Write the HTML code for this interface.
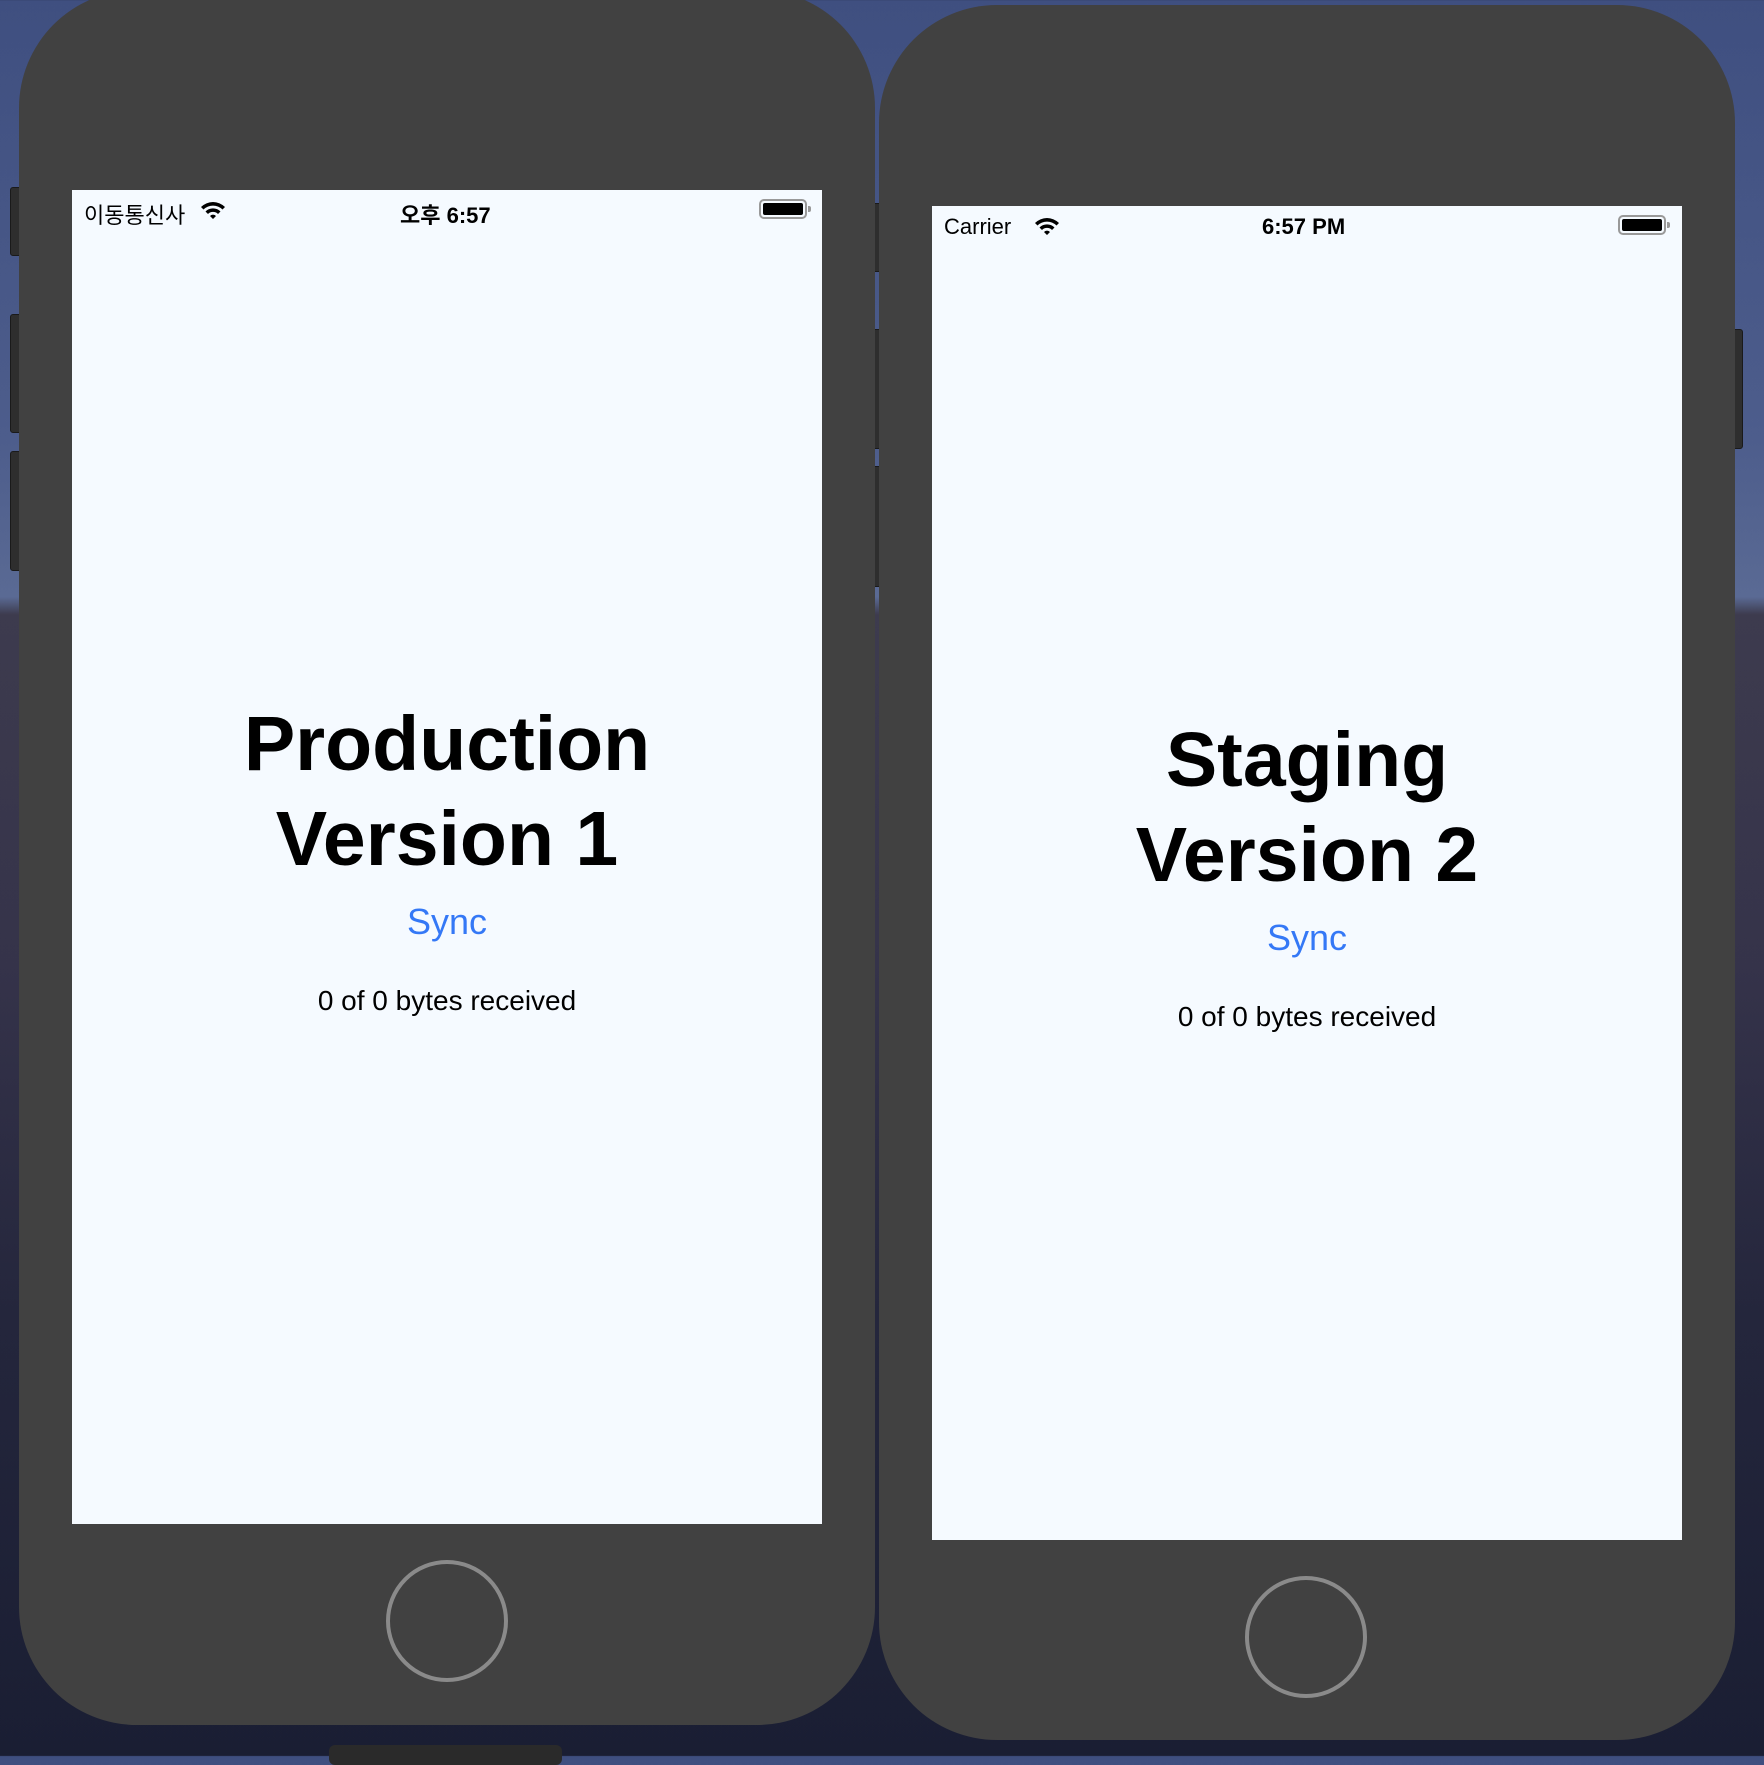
<!DOCTYPE html>
<html><head><meta charset="utf-8"><style>
*{margin:0;padding:0;box-sizing:border-box}
body{width:1764px;height:1756px;overflow:hidden;position:relative;font-family:"Liberation Sans","Noto Sans CJK KR",sans-serif;
background:linear-gradient(180deg,#3f4f80 0%,#4d5d8c 25%,#5a6a94 34%,#3d3b4e 35%,#35334a 55%,#24263c 75%,#1a1e33 100%);}
.ph{position:absolute;background:#414141;border-radius:118px;}
.btn{position:absolute;background:#2e2e2e;border:1px solid #1a1a1a;border-radius:3px;}
.scr{position:absolute;background:#f5faff;overflow:hidden}
.sb{position:absolute;top:8px;left:0;right:0;height:26px;font-size:22px;color:#000}
.t{position:absolute;left:0;right:0;text-align:center;color:#000}
.big{font-weight:bold;font-size:77px;line-height:1}
.sync{color:#3478f6;font-size:36px;line-height:1}
.by{font-size:28px;line-height:1}
.home{position:absolute;width:122px;height:122px;border:4px solid #8a8a8a;border-radius:50%}
.bat{position:absolute;width:48px;height:20px;border:2px solid #999;border-radius:5px;padding:2px}
.bat i{display:block;width:100%;height:100%;background:#000;border-radius:2px}
.bat:after{content:"";position:absolute;right:-6px;top:5px;width:3px;height:6px;background:#999;border-radius:0 2px 2px 0}
</style></head><body>
<div style="position:absolute;left:329px;top:1745px;width:233px;height:20px;background:#2a2a2a;border-radius:6px"></div>

<div class="btn" style="left:10px;top:187px;width:12px;height:69px"></div>
<div class="btn" style="left:10px;top:314px;width:12px;height:119px"></div>
<div class="btn" style="left:10px;top:451px;width:12px;height:120px"></div>
<div class="btn" style="left:871px;top:203px;width:12px;height:69px"></div>
<div class="btn" style="left:871px;top:329px;width:12px;height:120px"></div>
<div class="btn" style="left:871px;top:466px;width:12px;height:121px"></div>
<div class="btn" style="left:1731px;top:329px;width:12px;height:120px"></div>

<div class="ph" style="left:19px;top:-10px;width:856px;height:1735px"></div>
<div class="ph" style="left:879px;top:5px;width:856px;height:1735px"></div>

<div class="scr" style="left:72px;top:190px;width:750px;height:1334px">
 <div class="sb">
  <span style="position:absolute;left:12px;top:0">이동통신사</span>
  <svg style="position:absolute;left:126px;top:2px" width="30" height="20" viewBox="0 0 30 20"><path d="M3 7a17 17 0 0 1 24 0l-2.5 2.5a13.5 13.5 0 0 0-19 0z M7.5 11.5a10.5 10.5 0 0 1 15 0L20 14a7 7 0 0 0-10 0z M12 16a4 4 0 0 1 6 0l-3 3z" fill="#000"/></svg>
  <span style="position:absolute;left:328px;top:0;font-weight:bold">오후 6:57</span>
  <div class="bat" style="left:687px;top:1px"><i></i></div>
 </div>
 <div class="t big" style="top:516px">Production</div>
 <div class="t big" style="top:611px">Version 1</div>
 <div class="t sync" style="top:714px">Sync</div>
 <div class="t by" style="top:797px">0 of 0 bytes received</div>
</div>
<div class="home" style="left:386px;top:1560px"></div>

<div class="scr" style="left:932px;top:206px;width:750px;height:1334px">
 <div class="sb">
  <span style="position:absolute;left:12px;top:0">Carrier</span>
  <svg style="position:absolute;left:100px;top:2px" width="30" height="20" viewBox="0 0 30 20"><path d="M3 7a17 17 0 0 1 24 0l-2.5 2.5a13.5 13.5 0 0 0-19 0z M7.5 11.5a10.5 10.5 0 0 1 15 0L20 14a7 7 0 0 0-10 0z M12 16a4 4 0 0 1 6 0l-3 3z" fill="#000"/></svg>
  <span style="position:absolute;left:330px;top:0;font-weight:bold">6:57 PM</span>
  <div class="bat" style="left:686px;top:1px"><i></i></div>
 </div>
 <div class="t big" style="top:516px">Staging</div>
 <div class="t big" style="top:611px">Version 2</div>
 <div class="t sync" style="top:714px">Sync</div>
 <div class="t by" style="top:797px">0 of 0 bytes received</div>
</div>
<div class="home" style="left:1245px;top:1576px"></div>
</body></html>
